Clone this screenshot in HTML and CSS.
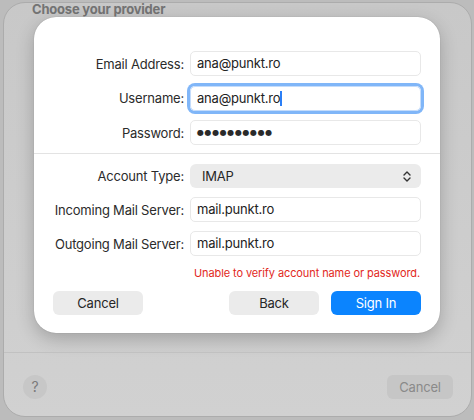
FILE: index.html
```html
<!DOCTYPE html>
<html lang="en">
  <head>
    <meta charset="UTF-8" />
    <title>Choose your provider</title>
    <link rel="stylesheet" href="styles.css">
  </head>
  <body>
    <div class="window">
      <div class="window-title">Choose your provider</div>

      <div class="sheet">
        <div class="form">
          <label class="label">Email Address:</label>
          <div class="field">ana@punkt.ro</div>

          <label class="label">Username:</label>
          <div class="field focused">ana@punkt.ro<span class="caret"></span></div>

          <label class="label">Password:</label>
          <div class="field password">●●●●●●●●●●</div>
        </div>

        <div class="divider"></div>

        <div class="form lower">
          <label class="label">Account Type:</label>
          <div class="select">
            <span>IMAP</span>
            <svg width="8" height="11" viewBox="0 0 8 11">
              <path d="M1 4 L4 1 L7 4 M1 7 L4 10 L7 7" fill="none" stroke="#333" stroke-width="1.4" stroke-linecap="round" stroke-linejoin="round" />
            </svg>
          </div>

          <label class="label">Incoming Mail Server:</label>
          <div class="field">mail.punkt.ro</div>

          <label class="label">Outgoing Mail Server:</label>
          <div class="field">mail.punkt.ro</div>
        </div>

        <div class="error">Unable to verify account name or password.</div>

        <div class="buttons">
          <button class="btn">Cancel</button>
          <div class="spacer"></div>
          <button class="btn">Back</button>
          <button class="btn primary">Sign In</button>
        </div>
      </div>

      <div class="window-footer">
        <div class="help">?</div>
        <button class="footer-btn">Cancel</button>
      </div>
    </div>
  </body>
</html>
```

FILE: styles.css
```css
html, body {
  margin: 0;
  width: 474px;
  height: 420px;
  overflow: hidden;
}
body {
  background: #bcbcbc;
  font-family: Inter, "Liberation Sans", sans-serif;
  font-size: 13px;
  letter-spacing: -0.2px;
  color: #262626;
}
.window {
  margin: 2px 2px 0 3px;
  height: 413px;
  border: 1px solid #acacac;
  border-radius: 22px;
  background: linear-gradient(#c8c8c8, #d1d1d1);
  display: flex;
  flex-direction: column;
  overflow: hidden;
}
.window-title {
  margin: 0 0 0 28px;
  line-height: 12px;
  height: 12px;
  font-weight: 700;
  color: #747474;
}
.sheet {
  margin: 2px 0 0 30px;
  width: 406px;
  height: 316px;
  box-sizing: border-box;
  background: #fff;
  border-radius: 22px;
  box-shadow: 0 6px 18px rgba(0, 0, 0, 0.22), 0 0 1px rgba(0, 0, 0, 0.3);
  padding-top: 34px;
  display: flex;
  flex-direction: column;
}
.form {
  display: grid;
  grid-template-columns: 150px 231px;
  column-gap: 6px;
  row-gap: 9.5px;
  align-items: center;
}
.form.lower {
  row-gap: 9px;
}
.label {
  text-align: right;
  color: #2b2b2b;
}
.field {
  height: 25px;
  box-sizing: border-box;
  border: 1px solid #e8e8e8;
  border-radius: 5px;
  padding-left: 6px;
  line-height: 23px;
  color: #222;
  white-space: nowrap;
}
.field.focused {
  border-color: #c4dcfb;
  box-shadow: 0 0 0 3px #80b6f8;
}
.caret {
  display: inline-block;
  width: 1.5px;
  height: 15px;
  background: #2b7ff6;
  vertical-align: -3px;
}
.field.password {
  font-family: "DejaVu Sans", sans-serif;
  font-size: 8px;
  letter-spacing: 0.6px;
  color: #2a2a2a;
}
.divider {
  margin: 8px 0 10px;
  height: 1px;
  background: #e3e3e3;
}
.select {
  height: 24px;
  background: #ebebeb;
  border-radius: 6px;
  display: flex;
  align-items: center;
  justify-content: space-between;
  padding: 0 10px 0 12px;
}
.error {
  margin: 10px 20px 0 0;
  text-align: right;
  font-size: 11px;
  letter-spacing: -0.1px;
  color: #e2281c;
}
.buttons {
  display: flex;
  gap: 12px;
  padding: 11px 19px 0 19px;
}
.spacer {
  flex: 1;
}
.btn {
  width: 90px;
  height: 24px;
  border: none;
  border-radius: 6px;
  background: #ebebeb;
  font-family: inherit;
  font-size: 13px;
  letter-spacing: -0.2px;
  color: #262626;
}
.btn.primary {
  background: #0b84fe;
  color: #fff;
}
.window-footer {
  margin-top: 19px;
  border-top: 1px solid #c1c1c1;
  flex: 1;
  display: flex;
  align-items: flex-start;
  justify-content: space-between;
  padding: 22px 18px 0 19px;
}
.help {
  width: 24px;
  height: 24px;
  border-radius: 50%;
  background: #c7c7c7;
  color: #7a7a7a;
  text-align: center;
  line-height: 24px;
  font-size: 14px;
}
.footer-btn {
  width: 66px;
  height: 24px;
  border: none;
  border-radius: 6px;
  background: #c6c6c6;
  font-family: inherit;
  font-size: 13px;
  letter-spacing: -0.2px;
  color: #8a8a8a;
}
```
